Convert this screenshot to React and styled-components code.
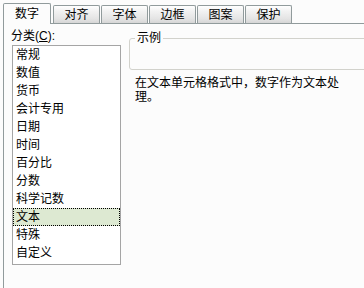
import React from "react";
import styled, { createGlobalStyle } from "styled-components";

const FONT = `"Liberation Sans", "Noto Sans CJK SC", sans-serif`;

const Global = createGlobalStyle`
  html, body { margin: 0; padding: 0; background: #fcfcfc; overflow: hidden; }
  body { font-family: ${FONT}; font-size: 12px; color: #000; }
`;

const Root = styled.div`
  width: 364px;
  height: 288px;
  box-sizing: border-box;
  padding: 3px 0 0 3px;
  overflow: hidden;
  display: flex;
  flex-direction: column;
`;

const TabStrip = styled.div`
  display: flex;
  align-items: flex-end;
  gap: 1px;
  height: 20px;
`;

const Tab = styled.div`
  box-sizing: border-box;
  width: ${(p) => (p.$active ? 48 : 47)}px;
  height: ${(p) => (p.$active ? 21 : 18)}px;
  margin-bottom: ${(p) => (p.$active ? -1 : 0)}px;
  margin-right: ${(p) => (p.$active ? 1 : 0)}px;
  border: 1px solid #919b9c;
  border-bottom: none;
  border-radius: 2px 2px 0 0;
  background: ${(p) =>
    p.$active
      ? "#fcfcfc"
      : "linear-gradient(#ffffff 0%, #f2f2f2 30%, #e4e4e4 75%, #d6d6d6 100%)"};
  position: relative;
  z-index: ${(p) => (p.$active ? 2 : 0)};
  display: flex;
  align-items: center;
  justify-content: center;
  line-height: 14px;
  padding-top: ${(p) => (p.$active ? 0 : 1)}px;
`;

const Panel = styled.div`
  flex: 1;
  border-left: 1px solid #919b9c;
  border-top: 1px solid #919b9c;
  padding: 5px 0 0 7px;
  display: flex;
  gap: 8px;
  background: #fcfcfc;
`;

const LeftCol = styled.div`
  width: 110px;
  display: flex;
  flex-direction: column;
`;

const Label = styled.div`
  line-height: 14px;
  height: 14px;
  white-space: nowrap;
`;

const ListBox = styled.div`
  margin: 2px 0 0 1px;
  width: 109px;
  height: 220px;
  box-sizing: border-box;
  border: 1px solid #a5a5a5;
  background: #ffffff;
  display: flex;
  flex-direction: column;
`;

const Item = styled.div`
  height: 18px;
  box-sizing: border-box;
  line-height: 16px;
  padding-left: 2px;
  border: 1px dotted ${(p) => (p.$selected ? "#000" : "transparent")};
  background: ${(p) => (p.$selected ? "#dde9d2" : "transparent")};
  white-space: nowrap;
`;

const RightCol = styled.div`
  flex: 1;
  display: flex;
  flex-direction: column;
`;

const Group = styled.fieldset`
  margin: 2px 0 0 0;
  padding: 0;
  width: 260px;
  height: 39px;
  box-sizing: border-box;
  border: 1px solid #d2d2cc;
  border-radius: 3px;
  min-width: 0;
`;

const Legend = styled.legend`
  margin-left: 5px;
  padding: 0 2px;
  line-height: 14px;
`;

const Desc = styled.p`
  margin: 6px 0 0 6px;
  width: 212px;
  line-height: 14px;
`;

const tabs = ["数字", "对齐", "字体", "边框", "图案", "保护"];
const items = [
  "常规",
  "数值",
  "货币",
  "会计专用",
  "日期",
  "时间",
  "百分比",
  "分数",
  "科学记数",
  "文本",
  "特殊",
  "自定义",
];

export default function App() {
  return (
    <>
      <Global />
      <Root>
        <TabStrip>
          {tabs.map((t, i) => (
            <Tab key={t} $active={i === 0}>
              {t}
            </Tab>
          ))}
        </TabStrip>
        <Panel>
          <LeftCol>
            <Label>
              分类(<u>C</u>):
            </Label>
            <ListBox>
              {items.map((it) => (
                <Item key={it} $selected={it === "文本"}>
                  {it}
                </Item>
              ))}
            </ListBox>
          </LeftCol>
          <RightCol>
            <Group>
              <Legend>示例</Legend>
            </Group>
            <Desc>在文本单元格格式中，数字作为文本处理。</Desc>
          </RightCol>
        </Panel>
      </Root>
    </>
  );
}
